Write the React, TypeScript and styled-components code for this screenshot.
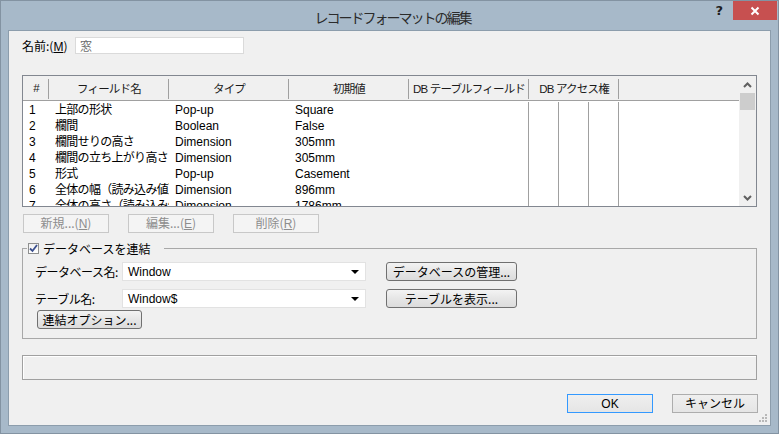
import styled, { createGlobalStyle } from "styled-components";

const GlobalStyle = createGlobalStyle`
  html, body {
    margin: 0;
    padding: 0;
    background: #ffffff;
  }
  body {
    font-family: "Liberation Sans", "Noto Sans CJK JP", sans-serif;
    font-size: 12px;
    color: #000;
  }
`;

const rows = [
  ["1", "上部の形状", "Pop-up", "Square"],
  ["2", "欄間", "Boolean", "False"],
  ["3", "欄間せりの高さ", "Dimension", "305mm"],
  ["4", "欄間の立ち上がり高さ", "Dimension", "305mm"],
  ["5", "形式", "Pop-up", "Casement"],
  ["6", "全体の幅（読み込み値）", "Dimension", "896mm"],
  ["7", "全体の高さ（読み込み値）", "Dimension", "1786mm"],
];

const columns = [
  { title: "#", width: 26 },
  { title: "フィールド名", width: 120 },
  { title: "タイプ", width: 120 },
  { title: "初期値", width: 120 },
  { title: "DB テーブルフィールド", width: 120 },
  { title: "DB アクセス権", width: 90 },
];

const App = () => {
  return (
    <>
      <GlobalStyle />
      <Window>
        <TitleBar>
          <Title>レコードフォーマットの編集</Title>
          <Help>?</Help>
          <CloseButton>
            <svg width="10" height="10" viewBox="0 0 10 10">
              <path d="M1.5 1.5 L8.5 8.5 M8.5 1.5 L1.5 8.5" stroke="#fff" strokeWidth="2" />
            </svg>
          </CloseButton>
        </TitleBar>
        <Client>
          <NameRow>
            <Label>
              名前:(<u>M</u>)
            </Label>
            <NameInput>窓</NameInput>
          </NameRow>

          <ListBox>
            <ListMain>
              <HeaderRow>
                {columns.map((c, i) => (
                  <HeaderCell key={i} $w={c.width}>
                    {c.title}
                  </HeaderCell>
                ))}
                <HeaderCell $w={0} $last />
              </HeaderRow>
              <Body>
                {rows.map((r, i) => (
                  <Row key={i}>
                    <Cell $w={26}>{r[0]}</Cell>
                    <Cell $w={120} $jp>{r[1]}</Cell>
                    <Cell $w={120}>{r[2]}</Cell>
                    <Cell $w={120}>{r[3]}</Cell>
                    <Cell $w={119} />
                    <Cell $w={30} $line />
                    <Cell $w={30} $line />
                    <Cell $w={30} $line />
                    <Cell $w={0} $line $grow />
                  </Row>
                ))}
              </Body>
            </ListMain>
            <ScrollBar>
              <ScrollArrow>
                <svg width="9" height="6" viewBox="0 0 9 6">
                  <path d="M1 5 L4.5 1.5 L8 5" stroke="#606060" strokeWidth="2" fill="none" />
                </svg>
              </ScrollArrow>
              <Thumb />
              <ScrollTrack />
              <ScrollArrow>
                <svg width="9" height="6" viewBox="0 0 9 6">
                  <path d="M1 1 L4.5 4.5 L8 1" stroke="#606060" strokeWidth="2" fill="none" />
                </svg>
              </ScrollArrow>
            </ScrollBar>
          </ListBox>

          <ButtonRow>
            <FlatButton disabled>
              新規...(<u>N</u>)
            </FlatButton>
            <FlatButton disabled>
              編集...(<u>E</u>)
            </FlatButton>
            <FlatButton disabled>
              削除(<u>R</u>)
            </FlatButton>
          </ButtonRow>

          <Group>
            <Legend>
              <CheckBox>
                <svg width="9" height="9" viewBox="0 0 9 9">
                  <path d="M1 4.5 L3.5 7 L8 1" stroke="#3b4f8e" strokeWidth="1.8" fill="none" />
                </svg>
              </CheckBox>
              データベースを連結
            </Legend>
            <GroupBody>
              <FormRow>
                <FormLabel>データベース名:</FormLabel>
                <Combo>
                  <span>Window</span>
                  <DropArrow />
                </Combo>
                <PushButton>データベースの管理...</PushButton>
              </FormRow>
              <FormRow>
                <FormLabel>テーブル名:</FormLabel>
                <Combo>
                  <span>Window$</span>
                  <DropArrow />
                </Combo>
                <PushButton>テーブルを表示...</PushButton>
              </FormRow>
              <OptionButton>連結オプション...</OptionButton>
            </GroupBody>
          </Group>

          <StatusBox />

          <FooterRow>
            <DialogButton $default>OK</DialogButton>
            <DialogButton>キャンセル</DialogButton>
          </FooterRow>

          <Grip>
            <svg width="8" height="8" viewBox="0 0 8 8">
              <rect x="6" y="0" width="2" height="2" fill="#b8b8b8" />
              <rect x="3" y="3" width="2" height="2" fill="#b8b8b8" />
              <rect x="6" y="3" width="2" height="2" fill="#b8b8b8" />
              <rect x="0" y="6" width="2" height="2" fill="#b8b8b8" />
              <rect x="3" y="6" width="2" height="2" fill="#b8b8b8" />
              <rect x="6" y="6" width="2" height="2" fill="#b8b8b8" />
            </svg>
          </Grip>
        </Client>
      </Window>
    </>
  );
};

export default App;

const Window = styled.div`
  width: 779px;
  height: 434px;
  box-sizing: border-box;
  background: #a7b9c9;
  border: 1px solid #8393a2;
  display: flex;
  flex-direction: column;
  padding: 0 7px 7px 7px;
`;

const TitleBar = styled.div`
  height: 29px;
  display: flex;
  align-items: flex-start;
  position: relative;
  margin-right: -6px;
`;

const Title = styled.div`
  position: absolute;
  left: 0;
  right: 0;
  top: 6px;
  text-align: center;
  font-family: "Noto Sans CJK JP", sans-serif;
  font-size: 14px;
  letter-spacing: -2px;
  color: #2b2b2b;
  line-height: 20px;
`;

const Help = styled.div`
  margin-left: auto;
  margin-top: 2px;
  margin-right: 10px;
  font-family: "DejaVu Sans", sans-serif;
  font-weight: bold;
  font-size: 13px;
  color: #1e1e1e;
  line-height: 16px;
`;

const CloseButton = styled.div`
  width: 44px;
  height: 19px;
  background: #c75050;
  display: flex;
  align-items: center;
  justify-content: center;
`;

const Client = styled.div`
  flex: 1;
  position: relative;
  background: #f0f0f0;
  border: 1px solid #8c9dac;
  padding: 0 13px;
  display: flex;
  flex-direction: column;
`;

const NameRow = styled.div`
  display: flex;
  align-items: center;
  margin-top: 6px;
  height: 17px;
`;

const Label = styled.div`
  width: 53px;
  font-family: "Noto Sans CJK JP", sans-serif;
  font-size: 12px;
  u {
    font-family: "Liberation Sans", sans-serif;
  }
`;

const NameInput = styled.div`
  width: 163px;
  height: 15px;
  background: #fff;
  border: 1px solid #dadada;
  padding-left: 4px;
  color: #6d6d6d;
  font-family: "Noto Sans CJK JP", sans-serif;
  font-size: 12px;
  line-height: 15px;
`;

const ListBox = styled.div`
  margin-top: 21px;
  height: 132px;
  box-sizing: border-box;
  border: 1px solid #828790;
  background: #fff;
  display: flex;
  overflow: hidden;
`;

const ListMain = styled.div`
  flex: 1;
  display: flex;
  flex-direction: column;
  overflow: hidden;
`;

const HeaderRow = styled.div`
  display: flex;
  height: 24px;
  flex-shrink: 0;
  background: #f0f0f0;
  border-bottom: 1px solid #a0a0a0;
`;

const HeaderCell = styled.div<{ $w: number; $last?: boolean }>`
  width: ${(p) => p.$w}px;
  flex: ${(p) => (p.$last ? 1 : "none")};
  display: flex;
  align-items: center;
  justify-content: center;
  white-space: nowrap;
  letter-spacing: -0.8px;
  font-family: "Liberation Sans", "Noto Sans CJK JP", sans-serif;
  font-size: 11.5px;
  color: #1a1a1a;
  position: relative;
  &::after {
    content: "";
    display: ${(p) => (p.$last ? "none" : "block")};
    position: absolute;
    right: 0;
    top: 3px;
    bottom: 1px;
    width: 1px;
    background: #a0a0a0;
  }
`;

const Body = styled.div`
  flex: 1;
  display: flex;
  flex-direction: column;
  padding-top: 1px;
`;

const Row = styled.div`
  display: flex;
  height: 16px;
  flex-shrink: 0;
`;

const Cell = styled.div<{ $w: number; $line?: boolean; $grow?: boolean; $jp?: boolean }>`
  width: ${(p) => p.$w}px;
  flex: ${(p) => (p.$grow ? 1 : "none")};
  box-sizing: border-box;
  padding-left: 6px;
  white-space: nowrap;
  overflow: hidden;
  line-height: 16px;
  font-family: "Liberation Sans", "Noto Sans CJK JP", sans-serif;
  font-size: 12px;
  letter-spacing: ${(p) => (p.$jp ? "-0.7px" : "0")};
  border-left: ${(p) => (p.$line ? "1px solid #a0a0a0" : "none")};
`;

const ScrollBar = styled.div`
  width: 17px;
  background: #f0f0f0;
  display: flex;
  flex-direction: column;
`;

const ScrollArrow = styled.div`
  height: 17px;
  display: flex;
  align-items: center;
  justify-content: center;
`;

const Thumb = styled.div`
  height: 17px;
  margin: 0 1px;
  background: #cdcdcd;
`;

const ScrollTrack = styled.div`
  flex: 1;
`;

const ButtonRow = styled.div`
  display: flex;
  gap: 19px;
  margin-top: 7px;
  margin-left: 1px;
`;

const FlatButton = styled.button`
  width: 86px;
  height: 19px;
  padding: 0;
  background: #f4f4f4;
  border: 1px solid #c8c8c8;
  color: #8d8d8d;
  font-family: "Noto Sans CJK JP", sans-serif;
  font-size: 12px;
  line-height: 16px;
  u {
    font-family: "Liberation Sans", sans-serif;
  }
`;

const Group = styled.fieldset`
  margin: 8px 0 0 0;
  padding: 0 0 9px 4px;
  border: 1px solid #a8a8a8;
  min-width: 0;
`;

const Legend = styled.legend`
  display: flex;
  align-items: center;
  gap: 4px;
  padding: 0 14px 0 1px;
  height: 15px;
  font-family: "Noto Sans CJK JP", sans-serif;
  font-size: 12px;
  line-height: 15px;
`;

const CheckBox = styled.span`
  width: 9px;
  height: 9px;
  border: 1px solid #8e8f8f;
  background: linear-gradient(#f0f0f0, #ffffff);
  display: flex;
  align-items: center;
  justify-content: center;
`;

const GroupBody = styled.div`
  margin-left: 8px;
  padding-top: 6px;
  display: flex;
  flex-direction: column;
  gap: 8px;
`;

const FormRow = styled.div`
  display: flex;
  align-items: center;
  height: 19px;
`;

const FormLabel = styled.div`
  width: 87px;
  font-family: "Noto Sans CJK JP", sans-serif;
  font-size: 12px;
  letter-spacing: -0.5px;
`;

const Combo = styled.div`
  width: 244px;
  height: 19px;
  box-sizing: border-box;
  background: #fff;
  border: 1px solid #e2e2e2;
  display: flex;
  align-items: center;
  padding: 0 6px 0 5px;
  font-size: 12px;
  span {
    flex: 1;
  }
`;

const DropArrow = styled.div`
  width: 0;
  height: 0;
  border-left: 4px solid transparent;
  border-right: 4px solid transparent;
  border-top: 4px solid #000;
`;

const raised = `
  box-sizing: border-box;
  background: linear-gradient(#f3f3f3, #e6e6e6 50%, #dcdcdc);
  border: 1px solid #707070;
  border-radius: 3px;
  font-family: "Noto Sans CJK JP", sans-serif;
  font-size: 12px;
  color: #000;
  padding: 0;
  line-height: 16px;
`;

const PushButton = styled.button`
  ${raised}
  margin-left: 20px;
  width: 131px;
  height: 19px;
`;

const OptionButton = styled.button`
  ${raised}
  width: 105px;
  height: 19px;
  margin-top: -6px;
  margin-left: 2px;
`;

const StatusBox = styled.div`
  margin-top: 16px;
  height: 25px;
  box-sizing: border-box;
  border: 1px solid #a0a0a0;
  box-shadow: inset 1px 1px 0 #ffffff;
`;

const FooterRow = styled.div`
  display: flex;
  justify-content: flex-end;
  gap: 19px;
  margin-top: 14px;
  margin-right: -1px;
`;

const DialogButton = styled.button<{ $default?: boolean }>`
  width: 86px;
  height: 19px;
  box-sizing: border-box;
  padding: 0;
  background: linear-gradient(#efefef, #e5e5e5);
  border: 1px solid ${(p) => (p.$default ? "#3399ff" : "#adadad")};
  font-family: "Liberation Sans", "Noto Sans CJK JP", sans-serif;
  font-size: 12px;
  color: #000;
  line-height: 16px;
`;

const Grip = styled.div`
  position: absolute;
  right: 3px;
  bottom: 3px;
  width: 8px;
  height: 8px;
  display: flex;
`;
